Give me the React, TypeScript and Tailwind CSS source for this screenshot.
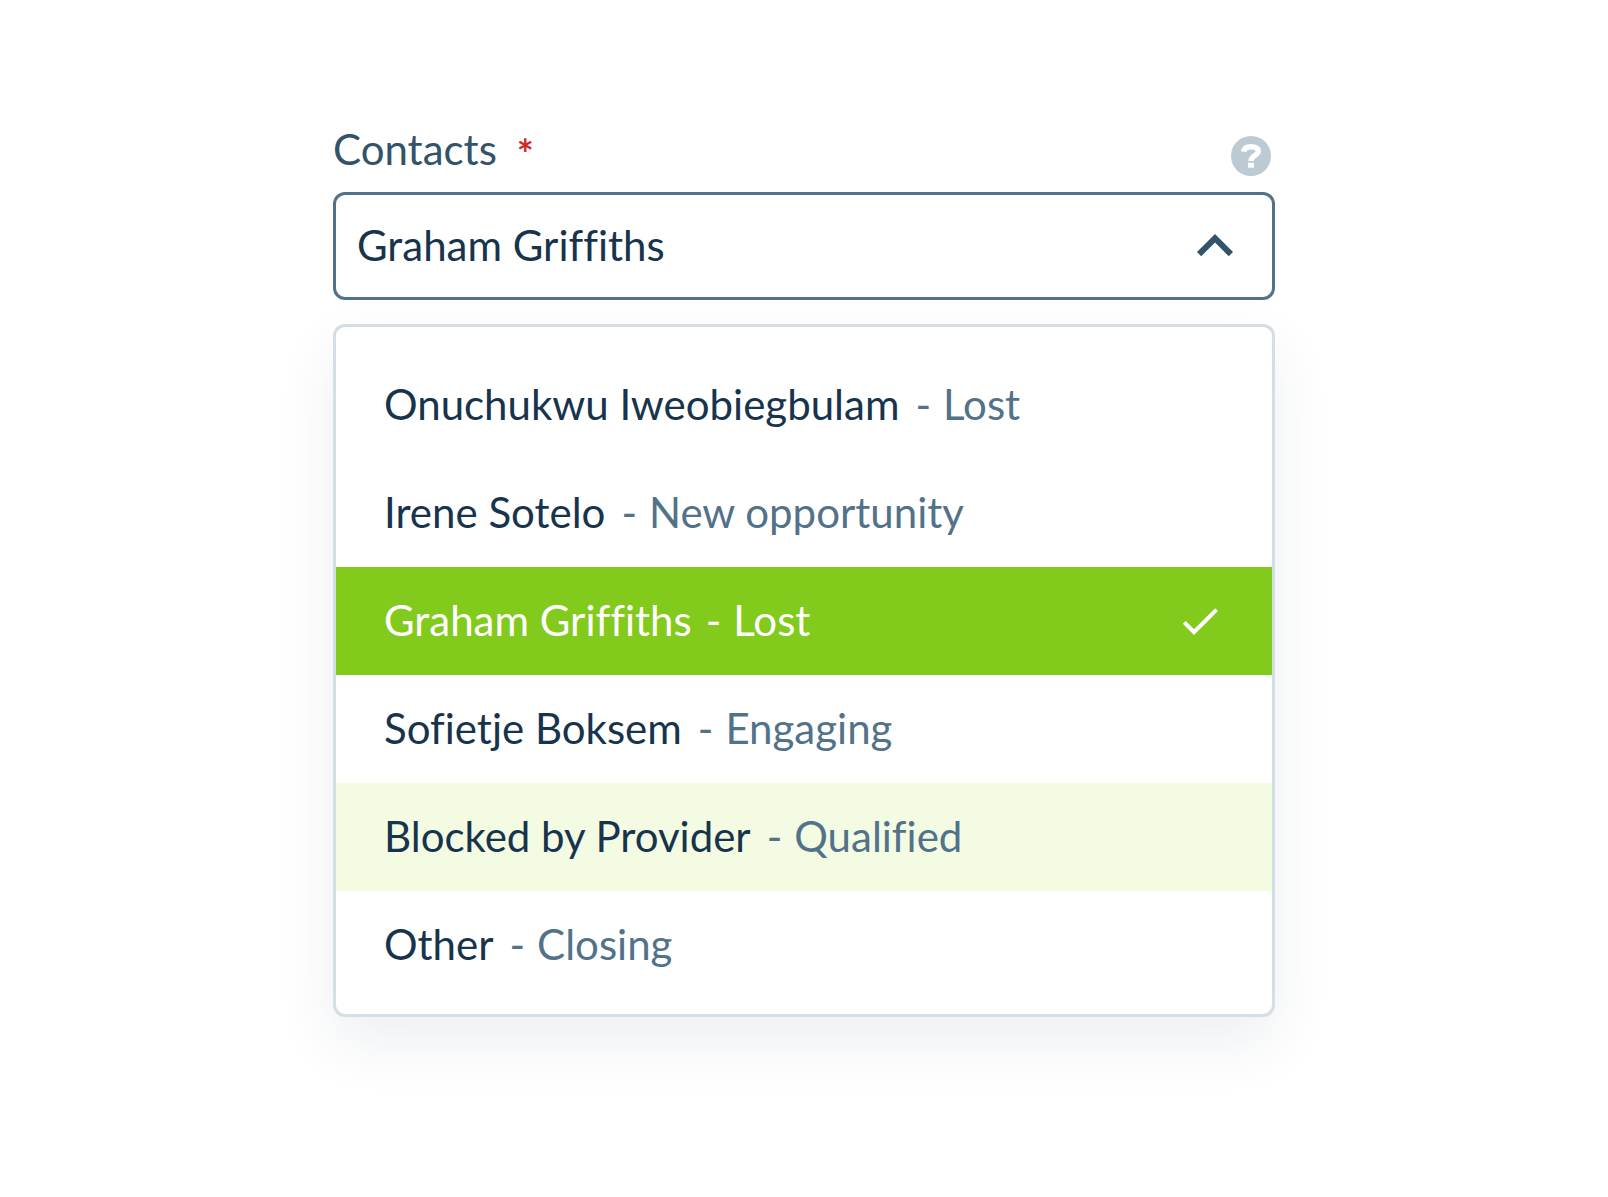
import { useState } from "react";

type Contact = { name: string; stage: string };

const contacts: Contact[] = [
  { name: "Onuchukwu Iweobiegbulam", stage: "Lost" },
  { name: "Irene Sotelo", stage: "New opportunity" },
  { name: "Graham Griffiths", stage: "Lost" },
  { name: "Sofietje Boksem", stage: "Engaging" },
  { name: "Blocked by Provider", stage: "Qualified" },
  { name: "Other", stage: "Closing" },
];

function ChevronUp() {
  return (
    <svg viewBox="0 0 24 24" className="size-18 shrink-0 fill-[#325369]" aria-hidden="true">
      <path d="M12 8l-6 6 1.41 1.41L12 10.83l4.59 4.58L18 14z" />
    </svg>
  );
}

function Check() {
  return (
    <svg viewBox="0 0 24 24" className="size-12 shrink-0 fill-current" aria-hidden="true">
      <path d="M9 16.17L4.83 12l-1.42 1.41L9 19 21 7l-1.41-1.41z" />
    </svg>
  );
}

function HelpIcon() {
  return (
    <svg viewBox="0 0 40 40" className="size-10" fill="none" aria-hidden="true">
      <circle cx="20" cy="20" r="20" fill="#bccad4" />
      <path
        d="M12.6 15.6C13.2 12 16 10.8 20 10.8c4.8 0 7.3 1.9 7.3 4.5C27.3 19.6 20 19 20 25"
        stroke="#fff"
        strokeWidth="5.4"
      />
      <path d="M20 26.7v5" stroke="#fff" strokeWidth="5.8" />
    </svg>
  );
}

function Option({
  contact,
  selected,
  active,
  onSelect,
  onHover,
}: {
  contact: Contact;
  selected: boolean;
  active: boolean;
  onSelect: () => void;
  onHover: () => void;
}) {
  const tone = selected
    ? "bg-[#82ca1c] text-white"
    : active
      ? "bg-[#f4fbe3] text-[#17344c]"
      : "bg-white text-[#17344c]";
  return (
    <button
      type="button"
      role="option"
      aria-selected={selected}
      onClick={onSelect}
      onMouseEnter={onHover}
      className={`flex h-27 w-full items-center justify-between px-12 text-left ${tone}`}
    >
      <span className={`flex pb-0.5 ${selected ? "gap-3.5" : "gap-4"}`}>
        <span>{contact.name}</span>
        <span className={`flex gap-3 ${selected ? "text-white" : "text-[#52728a]"}`}>
          <span>-</span>
          <span>{contact.stage}</span>
        </span>
      </span>
      {selected && <Check />}
    </button>
  );
}

export default function App() {
  const [open, setOpen] = useState(true);
  const [selected, setSelected] = useState(2);
  const [active, setActive] = useState(4);

  return (
    <main className="min-h-screen bg-white px-6 pt-30 font-['Lato',sans-serif] text-[42px] leading-[58px] [font-variant-ligatures:none]">
      <div className="mx-auto max-w-[942px]">
        <div className="flex items-start justify-between pr-1 pb-3.5">
          <label htmlFor="contacts" className="flex gap-5 text-[#325369]">
            Contacts{" "}
            <span className="pt-2.5 text-[40px] leading-12 font-bold text-[#cf2a2a]">*</span>
          </label>
          <button type="button" aria-label="Help" className="mt-4 rounded-full">
            <HelpIcon />
          </button>
        </div>
        <button
          id="contacts"
          type="button"
          aria-haspopup="listbox"
          aria-expanded={open}
          onClick={() => setOpen(!open)}
          className="flex h-27 w-full items-center justify-between rounded-xl border-3 border-[#52728a] bg-white px-[21px] text-left text-[#17344c]"
        >
          <span className="pb-0.5">{contacts[selected].name}</span>
          <ChevronUp />
        </button>
        {open && (
          <div
            role="listbox"
            aria-label="Contacts"
            className="mt-6 rounded-xl border-3 border-[#d3dee5] bg-white pt-6 pb-[15px] shadow-[0_26px_60px_rgba(23,52,76,0.08)]"
          >
            {contacts.map((c, i) => (
              <Option
                key={c.name}
                contact={c}
                selected={i === selected}
                active={i === active}
                onSelect={() => setSelected(i)}
                onHover={() => setActive(i)}
              />
            ))}
          </div>
        )}
      </div>
    </main>
  );
}
